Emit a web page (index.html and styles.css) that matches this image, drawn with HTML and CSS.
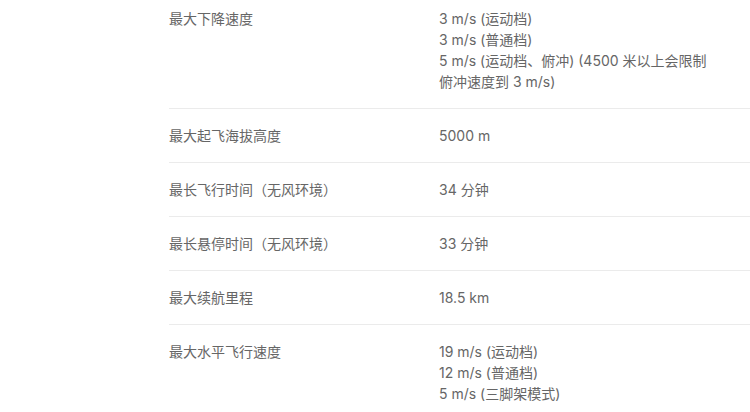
FILE: index.html
```html
<!DOCTYPE html>
<html lang="zh-CN">
<head>
<meta charset="utf-8">
<title>规格参数</title>
<link rel="stylesheet" href="styles.css">
</head>
<body>
<div class="specs">
  <div class="row first">
    <div class="label">最大下降速度</div>
    <div class="value">3 m/s (运动档)<br>3 m/s (普通档)<br>5 m/s (运动档、俯冲) (4500 米以上会限制俯冲速度到 3 m/s)</div>
  </div>
  <div class="row">
    <div class="label">最大起飞海拔高度</div>
    <div class="value">5000 m</div>
  </div>
  <div class="row">
    <div class="label">最长飞行时间（无风环境）</div>
    <div class="value">34 分钟</div>
  </div>
  <div class="row">
    <div class="label">最长悬停时间（无风环境）</div>
    <div class="value">33 分钟</div>
  </div>
  <div class="row">
    <div class="label">最大续航里程</div>
    <div class="value">18.5 km</div>
  </div>
  <div class="row">
    <div class="label">最大水平飞行速度</div>
    <div class="value">19 m/s (运动档)<br>12 m/s (普通档)<br>5 m/s (三脚架模式)</div>
  </div>
</div>
</body>
</html>
```
FILE: styles.css
```css
html, body {
  margin: 0;
  padding: 0;
  background: #ffffff;
  overflow: hidden;
}
body {
  font-family: Inter, "Noto Sans CJK SC", sans-serif;
  font-size: 14px;
  line-height: 21px;
  color: #666666;
}
.specs {
  margin-left: 169px;
}
.row {
  display: flex;
  padding: 16px 0;
  border-top: 1px solid #ebebeb;
}
.row.first {
  border-top: none;
  padding-top: 8px;
}
.label {
  width: 270px;
  flex: none;
}
.value {
  width: 272px;
  flex: none;
}
```
